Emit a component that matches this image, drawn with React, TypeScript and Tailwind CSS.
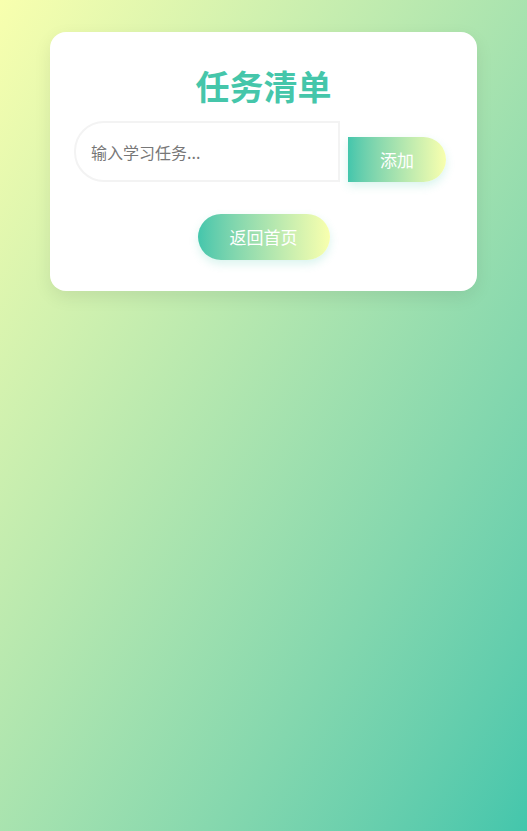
import { useState } from 'react';

const App = () => {
  const [task, setTask] = useState('');

  return (
    <div className="min-h-[831px] w-full bg-gradient-to-br from-[#f8ffae] to-[#43c6ac] px-[50px] pt-8 font-['Noto_Sans_CJK_SC','Noto_Sans',sans-serif]">
      <div className="rounded-2xl bg-white px-6 pt-[34px] pb-[31px] shadow-[0_6px_18px_rgba(0,0,0,0.08)]">
        <h1 className="text-center text-[34px] font-bold leading-[40px] text-[#45c6aa]">
          任务清单
        </h1>

        {/* Input row */}
        <div className="mt-[15px] flex items-end">
          <input
            value={task}
            onChange={(e) => setTask(e.target.value)}
            placeholder="输入学习任务..."
            className="h-[61px] w-[266px] rounded-l-[30px] border-2 border-[#f3f3f3] bg-white pl-[15px] text-base text-[#333] outline-none placeholder:text-[#777]"
          />
          <button className="ml-2 h-[45px] w-[98px] rounded-r-full bg-gradient-to-r from-[#43c6ac] to-[#f8ffae] text-[17px] text-white shadow-[0_4px_10px_rgba(67,198,172,0.2)]">
            添加
          </button>
        </div>

        <div className="mt-8 flex justify-center">
          <button className="h-[46px] w-[132px] rounded-full bg-gradient-to-r from-[#43c6ac] to-[#f8ffae] text-[17px] text-white shadow-[0_4px_10px_rgba(67,198,172,0.2)]">
            返回首页
          </button>
        </div>
      </div>
    </div>
  );
};

export default App;
